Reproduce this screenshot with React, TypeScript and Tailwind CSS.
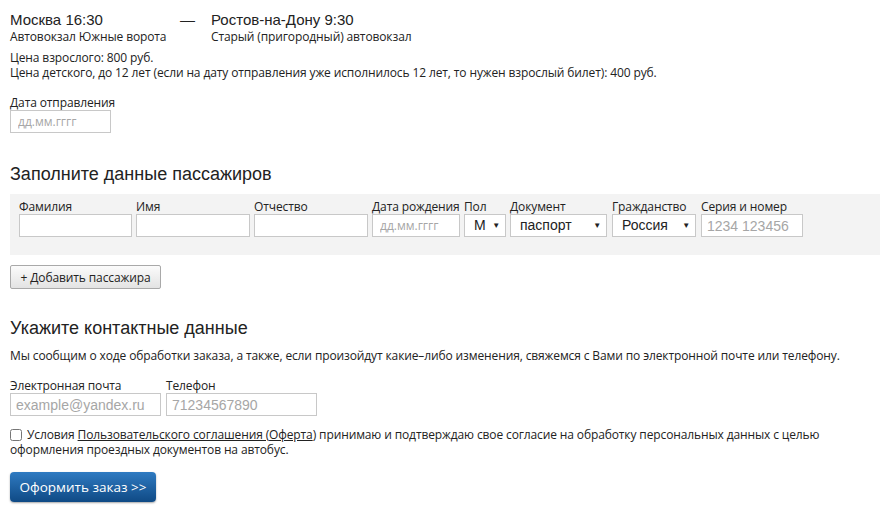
const PASSENGER_FIELDS = [
  { label: 'Фамилия', w: 'w-[113px]' },
  { label: 'Имя', w: 'w-[114px]' },
  { label: 'Отчество', w: 'w-[114px]' },
  { label: 'Дата рождения', w: 'w-[88px]', placeholder: 'дд.мм.гггг', small: true },
]

const SELECTS = [
  { label: 'Пол', w: 'w-[42px]', value: 'М', options: ['М', 'Ж'], gap: 'ml-0' },
  { label: 'Документ', w: 'w-[97px]', value: 'паспорт', options: ['паспорт', 'свидетельство о рождении'], gap: 'ml-0' },
  { label: 'Гражданство', w: 'w-[84px]', value: 'Россия', options: ['Россия'], gap: 'ml-[1px]' },
]

function Field({ label, w, placeholder, small }: { label: string; w: string; placeholder?: string; small?: boolean }) {
  return (
    <div className={`${w} flex flex-col`}>
      <span className="leading-[15px] whitespace-nowrap">{label}</span>
      <input
        placeholder={placeholder}
        className={`h-[23px] w-full border border-[#c8c8c8] bg-white outline-none placeholder:text-[#a6a6a6] ${
          small
            ? 'px-[7px] text-[12px] tracking-normal'
            : "px-[5px] text-[14px] tracking-normal font-['Liberation_Sans',Arial,sans-serif]"
        }`}
      />
    </div>
  )
}

function SelectField({ label, w, value, options }: { label: string; w: string; value: string; options: string[] }) {
  return (
    <div className={`${w} flex flex-col`}>
      <span className="leading-[15px] whitespace-nowrap">{label}</span>
      <div className="relative">
        <select
          defaultValue={value}
          className="h-[23px] w-full appearance-none border border-[#c8c8c8] bg-white pl-[9px] pr-[14px] text-[14px] tracking-normal text-[#222] font-['Liberation_Sans',Arial,sans-serif] outline-none"
        >
          {options.map((o) => (
            <option key={o}>{o}</option>
          ))}
        </select>
        <span className="pointer-events-none absolute right-[6px] top-[6px] text-[8px] leading-[10px] text-[#222]">▼</span>
      </div>
    </div>
  )
}

export default function App() {
  return (
    <div className="min-h-screen bg-white px-[10px] pt-[11px] text-[12px] leading-[15px] tracking-[-0.12px] text-[#222] font-['Open_Sans',sans-serif]">
      {/* Route */}
      <div className="flex">
        <div className="w-[170px]">
          <div className="text-[15px] leading-[18px] tracking-normal font-['Liberation_Sans',Arial,sans-serif]">Москва 16:30</div>
          <div className="whitespace-nowrap">Автовокзал Южные ворота</div>
        </div>
        <div className="w-[31px] text-[15px] leading-[18px] font-['Liberation_Sans',Arial,sans-serif]">—</div>
        <div>
          <div className="text-[15px] leading-[18px] tracking-normal font-['Liberation_Sans',Arial,sans-serif]">Ростов-на-Дону 9:30</div>
          <div>Старый (пригородный) автовокзал</div>
        </div>
      </div>

      <div className="mt-[6px]">
        <div>Цена взрослого: 800 руб.</div>
        <div>Цена детского, до 12 лет (если на дату отправления уже исполнилось 12 лет, то нужен взрослый билет): 400 руб.</div>
      </div>

      <div className="mt-[15px] flex flex-col">
        <span>Дата отправления</span>
        <input
          placeholder="дд.мм.гггг"
          className="h-[23px] w-[101px] border border-[#c8c8c8] px-[7px] text-[12px] tracking-normal outline-none placeholder:text-[#a6a6a6]"
        />
      </div>

      {/* Passengers */}
      <h2 className="mt-[30px] text-[18px] leading-[22px] tracking-normal text-[#222] font-['Liberation_Sans',Arial,sans-serif]">
        Заполните данные пассажиров
      </h2>
      <div className="mt-[9px] h-[61px] w-[870px] bg-[#f3f3f3] pl-[9px] pt-[5px]">
        <div className="flex gap-[4px]">
          {PASSENGER_FIELDS.map((f) => (
            <Field key={f.label} {...f} />
          ))}
          {SELECTS.map(({ gap, ...s }) => (
            <div key={s.label} className={gap}>
              <SelectField {...s} />
            </div>
          ))}
          <div className="ml-[1px]">
            <Field label="Серия и номер" w="w-[102px]" placeholder="1234 123456" />
          </div>
        </div>
      </div>

      <button className="mt-[10px] block h-[24px] w-[151px] rounded-[2px] border border-[#a9a9a9] bg-gradient-to-b from-[#fbfbfb] to-[#e3e3e3] text-[12px] text-[#222]">
        + Добавить пассажира
      </button>

      {/* Contacts */}
      <h2 className="mt-[28px] text-[18px] leading-[22px] tracking-normal text-[#222] font-['Liberation_Sans',Arial,sans-serif]">
        Укажите контактные данные
      </h2>
      <p className="mt-[9px]">
        Мы сообщим о ходе обработки заказа, а также, если произойдут какие–либо изменения, свяжемся с Вами по электронной почте или телефону.
      </p>

      <div className="mt-[15px] flex gap-[5px]">
        <Field label="Электронная почта" w="w-[151px]" placeholder="example@yandex.ru" />
        <Field label="Телефон" w="w-[151px]" placeholder="71234567890" />
      </div>

      <div className="mt-[11px]">
        <div className="flex items-center whitespace-nowrap">
          <input type="checkbox" className="m-0 mr-[5px] h-[12px] w-[12px] accent-[#888]" />
          <span>Условия&nbsp;</span>
          <a href="#" className="underline">Пользовательского соглашения (</a>
          <a href="#" className="underline">Оферта</a>
          <span>) принимаю и подтверждаю свое согласие на обработку персональных данных с целью</span>
        </div>
        <div>оформления проездных документов на автобус.</div>
      </div>

      <button className="mt-[15px] block h-[30px] w-[146px] rounded-[4px] bg-gradient-to-b from-[#2f7bc2] to-[#0f4a85] text-[13.5px] tracking-normal text-white shadow-[0_1px_2px_rgba(0,0,0,0.35)]">
        Оформить заказ &gt;&gt;
      </button>
    </div>
  )
}
